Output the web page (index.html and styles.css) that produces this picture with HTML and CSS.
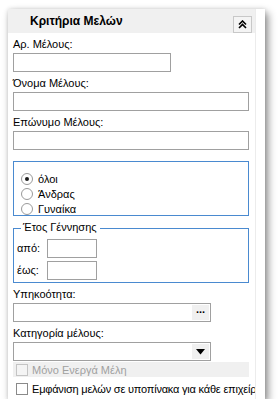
FILE: index.html
```html
<!DOCTYPE html>
<html lang="el">

<head>
    <meta charset="UTF-8">
    <meta name="viewport" content="width=device-width, initial-scale=1.0">
    <title>Κριτήρια Μελών</title>
    <link rel="stylesheet" href="styles.css">
</head>

<body>
    <div class="panel">
        <div class="panel-main">
            <div class="panel-header">
                <span class="panel-title">Κριτήρια Μελών</span>
                <button class="collapse-btn" type="button">
                    <svg width="9" height="9" viewBox="0 0 9 9">
                        <path d="M1 4.5 L4.5 1 L8 4.5 M1 8 L4.5 4.5 L8 8" fill="none" stroke="#000" stroke-width="1.6"/>
                    </svg>
                </button>
            </div>

            <div class="panel-body">
                <div class="field-label">Αρ. Μέλους:</div>
                <div class="text-box short"></div>

                <div class="field-label">Όνομα Μέλους:</div>
                <div class="text-box"></div>

                <div class="field-label">Επώνυμο Μέλους:</div>
                <div class="text-box"></div>

                <div class="radio-group">
                    <div class="radio-row"><span class="radio checked"></span>όλοι</div>
                    <div class="radio-row"><span class="radio"></span>Άνδρας</div>
                    <div class="radio-row"><span class="radio"></span>Γυναίκα</div>
                </div>

                <div class="year-box">
                    <span class="year-legend">Έτος Γέννησης</span>
                    <div class="year-row"><span class="year-label">από:</span><div class="text-box year"></div></div>
                    <div class="year-row"><span class="year-label">έως:</span><div class="text-box year"></div></div>
                </div>

                <div class="field-label">Υπηκοότητα:</div>
                <div class="text-box medium with-btn"><span class="box-btn dots">...</span></div>

                <div class="field-label">Κατηγορία μέλους:</div>
                <div class="text-box medium with-btn">
                    <span class="box-btn">
                        <svg width="9" height="6" viewBox="0 0 9 6"><path d="M0 0 H9 L4.5 5.5 Z" fill="#000"/></svg>
                    </span>
                </div>

                <div class="check-row disabled"><span class="check"></span>Μόνο Ενεργά Μέλη</div>
                <div class="check-row tight"><span class="check"></span>Εμφάνιση μελών σε υποπίνακα για κάθε επιχείρηση</div>
            </div>
        </div>
    </div>
</body>

</html>
```

FILE: styles.css
```css
body {
    margin: 0;
    padding-top: 9px;
    background: #fff;
    font-family: 'Liberation Sans', Arial, sans-serif;
    font-size: 11px;
    color: #000;
}

.panel {
    display: flex;
    width: 257px;
    height: 390px;
    margin-left: 8px;
    background: #fff;
    box-shadow: 3px 4px 8px rgba(0, 0, 0, 0.45), 0 0 4px rgba(0, 0, 0, 0.12);
}

.panel-main {
    width: 247px;
    border-right: 1px solid #ececec;
    overflow: hidden;
}

.panel-header {
    display: flex;
    align-items: center;
    justify-content: space-between;
    height: 24px;
    padding: 0 3px 0 22px;
    background: #f0f0f0;
}

.panel-title {
    font-weight: bold;
    font-size: 12px;
}

.collapse-btn {
    display: flex;
    align-items: center;
    justify-content: center;
    width: 19px;
    height: 17px;
    margin-top: 6px;
    padding: 0;
    background: #f4f4f4;
    border: 1px solid #c8c8c8;
}

.panel-body {
    padding: 0 6px 0 5px;
}

.field-label {
    height: 20px;
    line-height: 13px;
    padding-top: 5px;
    box-sizing: border-box;
    white-space: nowrap;
}

.text-box {
    display: flex;
    justify-content: flex-end;
    align-items: center;
    height: 19px;
    border: 1px solid #a0a0a0;
    box-sizing: border-box;
    background: #fff;
}

.text-box.short {
    width: 158px;
}

.text-box.medium {
    width: 198px;
}

.text-box.year {
    width: 50px;
}

.box-btn {
    display: flex;
    align-items: center;
    justify-content: center;
    width: 17px;
    height: 15px;
    margin-right: 1px;
    background: #f0f0f0;
}

.box-btn.dots {
    font-weight: bold;
    font-size: 11px;
    line-height: 9px;
    align-items: flex-start;
}

.radio-group {
    margin-top: 11px;
    height: 55px;
    padding: 9px 0 0 7px;
    border: 1px solid #4a8ad0;
    box-sizing: border-box;
}

.radio-row {
    display: flex;
    align-items: center;
    height: 15px;
}

.radio {
    position: relative;
    width: 10px;
    height: 10px;
    margin-right: 5px;
    border: 1px solid #9a9a9a;
    border-radius: 50%;
    background: #fff;
}

.radio.checked::after {
    content: '';
    position: absolute;
    left: 3px;
    top: 3px;
    width: 4px;
    height: 4px;
    border-radius: 50%;
    background: #1c1c1c;
}

.year-box {
    position: relative;
    margin-top: 12px;
    height: 55px;
    padding: 9px 0 0 3px;
    border: 1px solid #4a8ad0;
    box-sizing: border-box;
}

.year-legend {
    position: absolute;
    top: -8px;
    left: 7px;
    padding: 0 3px 0 2px;
    background: #fff;
}

.year-row {
    display: flex;
    align-items: center;
    height: 20px;
    margin-bottom: 2px;
}

.year-label {
    width: 30px;
}

.check-row {
    display: flex;
    align-items: center;
    height: 15px;
    padding-left: 3px;
    white-space: nowrap;
}

.check-row.disabled {
    margin-top: 1px;
    background: #f0f0f0;
    color: #a0a0a0;
    width: 233px;
}

.check-row + .check-row {
    margin-top: 4px;
}

/* squeeze the long caption a bit so more of it shows before the clip */
.check-row.tight {
    letter-spacing: -0.2px;
}

.check {
    width: 10px;
    height: 10px;
    margin-right: 4px;
    border: 1px solid #8a8a8a;
    background: #fff;
    flex-shrink: 0;
}

.disabled .check {
    border-color: #c4c4c4;
    background: #f4f4f4;
}
```
